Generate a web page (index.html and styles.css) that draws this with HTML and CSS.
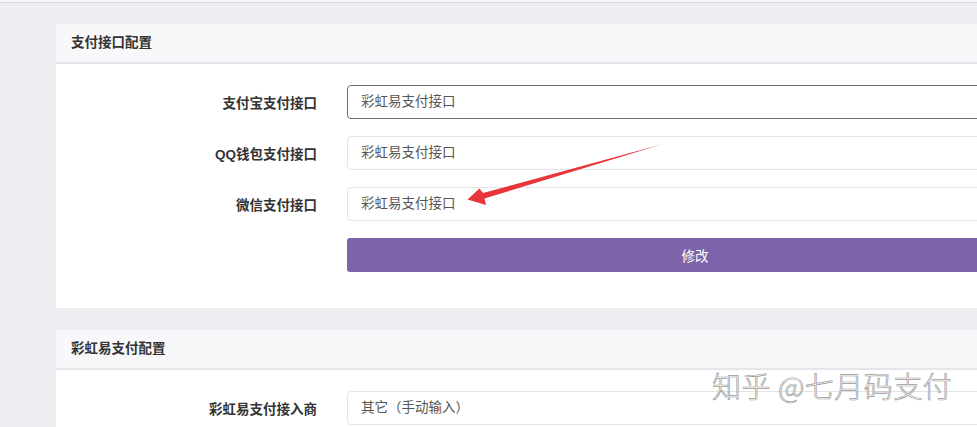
FILE: index.html
```html
<!DOCTYPE html>
<html lang="zh-CN">
<head>
<meta charset="utf-8">
<title>支付接口配置</title>
<link rel="stylesheet" href="styles.css">
</head>
<body>
<div class="topbar"></div>
<main class="content">
  <section class="panel">
    <div class="panel-heading">支付接口配置</div>
    <form class="panel-body">
      <div class="form-row">
        <label class="form-label">支付宝支付接口</label>
        <div class="form-input is-focused">彩虹易支付接口</div>
      </div>
      <div class="form-row">
        <label class="form-label">QQ钱包支付接口</label>
        <div class="form-input">彩虹易支付接口</div>
      </div>
      <div class="form-row">
        <label class="form-label">微信支付接口</label>
        <div class="form-input">彩虹易支付接口</div>
      </div>
      <div class="form-row">
        <span class="form-label"></span>
        <button type="button" class="btn-submit">修改</button>
      </div>
    </form>
  </section>

  <section class="panel">
    <div class="panel-heading">彩虹易支付配置</div>
    <form class="panel-body">
      <div class="form-row">
        <label class="form-label">彩虹易支付接入商</label>
        <div class="form-input">其它（手动输入）</div>
      </div>
    </form>
  </section>
</main>

<svg class="arrow" width="977" height="427" viewBox="0 0 977 427">
  <path d="M663 144 L483 193 L479.5 188.5 L467.5 199.5 L486 205 L484.5 198.5 Z" fill="#e8353a"/>
</svg>

<div class="watermark">知乎 @七月码支付</div>
</body>
</html>
```
FILE: styles.css
```css
html, body {
  margin: 0;
  padding: 0;
  overflow: hidden;
}

body {
  width: 977px;
  height: 427px;
  background: #eeedf2;
  font-family: "Liberation Sans", "Noto Sans CJK SC", sans-serif;
  font-size: 14px;
  color: #333;
  position: relative;
}

.topbar {
  height: 2px;
  background: #f6f6f8;
  border-bottom: 1px solid #dcdbe2;
}

.content {
  padding: 21px 0 0 56px;
  width: 1010px;
  display: flex;
  flex-direction: column;
  gap: 22px;
}

.panel {
  background: #fff;
}

.panel-heading {
  height: 38px;
  line-height: 38px;
  padding-left: 15px;
  background: #f8f8fa;
  border-bottom: 2px solid #e6e5eb;
  font-weight: bold;
  font-size: 13.5px;
  color: #333;
}

.panel-body {
  margin: 0;
  padding: 21px 0 36px;
  display: flex;
  flex-direction: column;
  gap: 17px;
}

.form-row {
  display: flex;
  align-items: center;
  gap: 30px;
}

.form-label {
  width: 261px;
  flex: none;
  text-align: right;
  font-weight: bold;
  font-size: 13.5px;
  color: #333;
}

.form-input {
  width: 696px;
  height: 34px;
  box-sizing: border-box;
  border: 1px solid #e3e3e6;
  border-radius: 4px;
  padding: 0 13px;
  line-height: 32px;
  font-size: 13.5px;
  color: #555;
  background: #fff;
}

.form-input.is-focused {
  border-color: #6d6c78;
}

.btn-submit {
  width: 696px;
  height: 34px;
  border: 0;
  border-radius: 3px;
  background: #7d63a9;
  color: #fff;
  font-family: inherit;
  font-size: 13.5px;
  padding: 0;
}

.arrow {
  position: absolute;
  left: 0;
  top: 0;
  pointer-events: none;
}

.watermark {
  position: absolute;
  left: 712px;
  top: 364px;
  font-size: 29px;
  letter-spacing: 0.5px;
  color: rgba(255, 255, 255, 0.85);
  -webkit-text-stroke: 0.7px #9a9a9a;
  font-family: "Noto Sans CJK SC", sans-serif;
  font-weight: 300;
  white-space: nowrap;
}
```
